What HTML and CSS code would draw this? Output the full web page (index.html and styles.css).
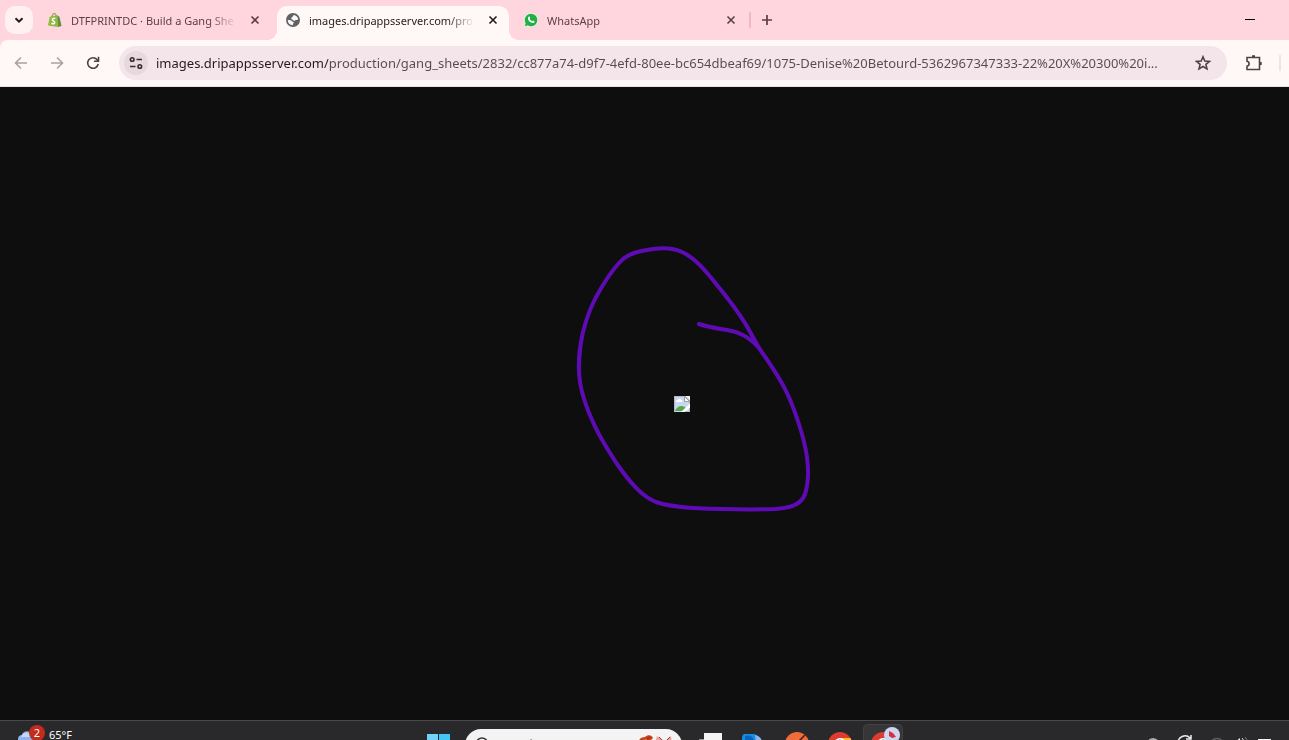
FILE: index.html
```html
<!DOCTYPE html>
<html lang="en">
<head>
    <meta charset="UTF-8">
    <meta name="viewport" content="width=device-width, initial-scale=1.0">
    <title>images.dripappsserver.com</title>
    <link rel="stylesheet" href="styles.css">
</head>
<body>
<header class="browser">
    <!-- tab strip -->
    <div class="tab-strip">
        <button class="tab-search" aria-label="Search tabs">
            <svg width="12" height="12" viewBox="0 0 12 12"><path d="M2.500 4.200 6 7.600l3.500-3.400" fill="none" stroke="#26191c" stroke-width="2"/></svg>
        </button>
        <div class="tab">
            <svg class="favicon" viewBox="0 0 16 16">
                <path d="M2 4.200 10.500 2.600 11.300 16 0 14.200z" fill="#8dbb3f"/>
                <path d="M10.500 2.600 13 4.200 15.500 14.800 11.300 16z" fill="#5e8e3e"/>
                <path d="M4.500 4.500C5 1.500 6.500.4 7.600.6 8.800.8 9.300 2.200 9.300 3.600" fill="none" stroke="#7fa83c" stroke-width="1.200"/>
                <path d="M8.300 6.500C6.500 5.700 5 6.300 5 7.700c0 1.600 2.800 1.400 2.700 3.300C7.600 12.500 5.800 12.700 4 11.700" fill="none" stroke="#fff" stroke-width="1.700"/>
            </svg>
            <button class="tab-title">DTFPRINTDC · Build a Gang She</button>
            <button class="tab-close" aria-label="Close tab"><svg width="10" height="10" viewBox="0 0 10 10"><path d="M1.500 1.500l7 7M8.500 1.500l-7 7"/></svg></button>
        </div>
        <div class="tab active">
            <svg class="favicon" viewBox="0 0 16 16">
                <circle cx="8" cy="8" r="8" fill="#5f6368"/>
                <path d="M9 2.200c2.300.4 4.200 2 5 4.300-.6 1.300-1.500 1.900-2.600 1.500-.9-.3-1 1-2 1-1.200 0-1-1.300-2-1.700-1.100-.4-1.600-.8-1.300-1.700.3-.8 1.200-.6 1.500-1.300.2-.8.600-1.500 1.400-2.100zM2 8c1.800 0 4.300 0 5 1.300.6.900 1.800.6 2 1.600.2.900-.9 1.100-1.100 1.900-.1.500 0 .8-.3 1.200C4.500 13.800 2 11.300 2 8z" fill="#fff8f7"/>
            </svg>
            <button class="tab-title">images.dripappsserver.com/pro</button>
            <button class="tab-close" aria-label="Close tab"><svg width="10" height="10" viewBox="0 0 10 10"><path d="M1.500 1.500l7 7M8.500 1.500l-7 7"/></svg></button>
        </div>
        <div class="tab">
            <svg class="favicon" viewBox="0 0 16 16">
                <path d="M.3 15.700 1.400 11.800A7.600 7.600 0 1 1 4.300 14.700z" fill="#1fb141" stroke="#fff" stroke-width=".8"/>
                <path d="M5.300 4.200c.4-.4 1-.3 1.200.2l.5 1.200c.1.500-.5.800-.5 1.200.6 1.200 1.500 2 2.700 2.500.4 0 .8-.8 1.200-.7l1.400.7c.3.200.3 1.200-.3 1.700-1 .8-2.300.6-3.900-.3C6 9.800 4.900 8.300 4.600 6.900c-.2-1.200.1-2.100.7-2.700z" fill="#fff"/>
            </svg>
            <button class="tab-title">WhatsApp</button>
            <button class="tab-close" aria-label="Close tab"><svg width="10" height="10" viewBox="0 0 10 10"><path d="M1.500 1.500l7 7M8.500 1.500l-7 7"/></svg></button>
        </div>
        <span class="tab-divider"></span>
        <button class="new-tab" aria-label="New tab">
            <svg width="12" height="12" viewBox="0 0 12 12"><path d="M6 1v10M1 6h10" stroke="#5b3f45" stroke-width="1.700"/></svg>
        </button>
        <button class="minimize" aria-label="Minimize">
            <svg width="10" height="10" viewBox="0 0 10 10"><path d="M0 4.500h10" stroke="#000"/></svg>
        </button>
    </div>

    <!-- toolbar -->
    <div class="toolbar">
        <nav class="nav-buttons">
            <button class="icon-btn muted" aria-label="Back">
                <svg width="16" height="16" viewBox="0 0 16 16"><path d="M14 8H3M8 2.500 2.500 8 8 13.500"/></svg>
            </button>
            <button class="icon-btn muted" aria-label="Forward">
                <svg width="16" height="16" viewBox="0 0 16 16"><path d="M2 8h11M8 2.500 13.500 8 8 13.500"/></svg>
            </button>
            <button class="icon-btn" aria-label="Reload">
                <svg width="16" height="16" viewBox="0 0 16 16"><path d="M13.200 9A5.300 5.300 0 1 1 12 4.500L13.500 6M13.500 1.800V6.200H9"/></svg>
            </button>
        </nav>
        <div class="omnibox">
            <button class="site-info" aria-label="View site information">
                <svg width="14" height="14" viewBox="0 0 14 14"><path d="M7.500 3.500h5.500M1 10.500h5.500"/><circle cx="3.200" cy="3.500" r="1.800"/><circle cx="10.800" cy="10.500" r="1.800"/></svg>
            </button>
            <input class="url" type="text" aria-label="Address and search bar" value="images.dripappsserver.com/production/gang_sheets/2832/cc877a74-d9f7-4efd-80ee-bc654dbeaf69/1075-Denise%20Betourd-5362967347333-22%20X%20300%20i...">
            <button class="icon-btn" aria-label="Bookmark this tab">
                <svg width="16" height="16" viewBox="0 0 16 16"><path d="M8 1.800 9.800 6l4.700.4-3.600 3 1.100 4.500L8 11.500l-4 2.400 1.100-4.500-3.600-3L6.200 6z"/></svg>
            </button>
        </div>
        <button class="icon-btn" aria-label="Extensions">
            <svg width="18" height="18" viewBox="0 0 18 18"><path d="M2 3.500H14.500V15.500H2V12.200C4.800 11.800 4.800 7.800 2 7.300z"/><path d="M7 2.500h3M15.500 8v3" stroke-width="2.400"/></svg>
        </button>
        <span class="toolbar-divider"></span>
    </div>
</header>

<main class="page">
    <svg class="broken-image" role="img" aria-label="Image failed to load" viewBox="0 0 16 16">
        <path d="M0 0h11l5 5v11H0z" fill="#c6d6f3"/>
        <path d="M11 0h5v5z" fill="#f0f0f0"/>
        <path d="M2 6c0-1.500 1-2 2-2 .6-1.700 3-1.500 3.300 0C8.500 4 9 5 8.500 6z" fill="#fff"/>
        <path d="M1 15c1-3 3.500-5 6.500-5 2 0 3.500 1 4.500 2L8.500 15z" fill="#5aa845"/>
        <path d="M16 7.500v4L11.500 16H7z" fill="#fff"/>
        <path d="M.5 15.500V.5H11L15.500 5v3M11 15.500h4.500V12" fill="none" stroke="#b5b9c0"/>
        <path d="M10.500.5v5h5z" fill="#fff" stroke="#a0a0a0"/>
    </svg>
    <!-- pen stroke drawn over the page -->
    <svg class="pen-mark" viewBox="0 0 238 270">
        <path d="M124 80C133 83 140 84 152 86C165 88 174 93 184 104C196 121 205 134 212 149C219 164 229 192 232 213C234 229 233 241 230 250C226 262 213 264 200 265C175 266 140 265 118 264C103 263 92 262 81 258C66 252 54 237 42 220C29 200 23 190 18 178C11 163 7 151 5 138C3 125 4 105 8 88C12 72 17 59 25 46C32 34 36 28 44 19C52 9 65 7 78 5C91 3 99 4 107 8C120 14 130 26 142 41C155 57 166 71 174 86L184 104"/>
    </svg>
</main>

<footer class="taskbar">
    <button class="weather">
        <span class="weather-icon">
            <svg width="28" height="20" viewBox="0 0 28 20"><path d="M0 14c0-3 2-4 4-4 1-5 9-5 10 0 4 0 5 3 5 5v5H0z" fill="#8fb2f0"/><path d="M3 12c1-5 9-6 10 0z" fill="#c3d7fa"/></svg>
            <span class="badge">2</span>
        </span>
        <span class="degrees">65°F</span>
    </button>
    <div class="apps">
        <button class="app start" aria-label="Start">
            <svg width="23" height="23" viewBox="0 0 23 23"><path d="M0 0h11v11H0z" fill="#72d2f7"/><path d="M12 0h11v11H12z" fill="#43c5f5"/><path d="M0 12h11v11H0zM12 12h11v11H12z" fill="#1eaaf0"/></svg>
        </button>
        <label class="search">
            <svg width="14" height="16" viewBox="0 0 14 16"><circle cx="7" cy="6.500" r="5.500" fill="none" stroke="#333" stroke-width="1.500"/></svg>
            <input type="text" placeholder="Search" aria-label="Search">
            <svg class="search-art" width="36" height="20" viewBox="0 0 36 20">
                <path d="M1 12C1 5 4 3 8 3c3-3 7-2 8 1-2 3-5 2-6 6z" fill="#c8421b"/><path d="M4 8l4-3 3 1-3 4z" fill="#e8792b"/><path d="M10 5l3-2" stroke="#8b2312"/>
                <path d="M20 2l6 4h3l5-4 1 9-5 2H22l-4-3z" fill="#f1a09b"/><path d="M22 3l3 3M33 3l-3 3" stroke="#8c3d3c"/>
            </svg>
        </label>
        <button class="app" aria-label="Task view">
            <svg width="24" height="24" viewBox="0 0 24 24"><path d="M0 7h17v16H0z" fill="#999"/><path d="M5 1h18v17H5z" fill="#f4f4f4"/></svg>
        </button>
        <button class="app" aria-label="Mail">
            <svg width="24" height="24" viewBox="0 0 24 24"><path d="M2 2h11l4 6v15H0V8c0-3 0-5 2-6z" fill="#168ee0"/><path d="M3 4q7-2 9 5H3z" fill="#0863bd"/><path d="M13 3q6 1 7 7h-6z" fill="#91b6ed"/></svg>
        </button>
        <button class="app" aria-label="Postman">
            <svg width="24" height="24" viewBox="0 0 24 24"><circle cx="12" cy="12" r="12" fill="#f26b3a"/><path d="M20 3 12 11" stroke="#3a211b" stroke-width="1.500"/></svg>
        </button>
        <button class="app" aria-label="Chrome">
            <svg width="24" height="24" viewBox="0 0 24 24"><circle cx="12" cy="12" r="12" fill="#dd3b30"/><path d="M12 6h10.400A12 12 0 0 1 24 12v8H12z" fill="#fbc116"/><circle cx="12" cy="12" r="6" fill="#fff"/><circle cx="12" cy="12" r="4.500" fill="#4285f4"/></svg>
        </button>
        <button class="app running" aria-label="Chrome, profile window">
            <svg width="24" height="24" viewBox="0 0 24 24"><circle cx="12" cy="12" r="12" fill="#dd3b30"/><circle cx="12" cy="12" r="6" fill="#fff"/><circle cx="12" cy="12" r="4.500" fill="#4285f4"/></svg>
            <svg class="profile" width="16" height="16" viewBox="0 0 16 16"><circle cx="8" cy="8" r="8" fill="#cfd5ef"/><path d="M5 4l4 2 3 4-4 1-3-2z" fill="#d6303f"/></svg>
        </button>
    </div>
    <div class="tray">
        <div class="tray-icons">
            <svg width="16" height="16" viewBox="0 0 16 16"><path d="M4 10.500Q8 7.500 12 10.500" fill="none" stroke="#aaa" stroke-width="2"/></svg>
            <svg width="16" height="16" viewBox="0 0 16 16"><path d="M1 12A7 7 0 0 1 13 8M14 5v4H9" fill="none" stroke="#eee" stroke-width="1.500"/></svg>
            <svg width="16" height="16" viewBox="0 0 16 16"><path d="M2 12a7 7 0 0 1 12 0" fill="none" stroke="#5d5d5e" stroke-width="1.500"/></svg>
        </div>
        <svg width="16" height="16" viewBox="0 0 16 16"><path d="M2 12l5-4v8z" fill="#eee"/><path d="M9 8q3 3 3 7" fill="none" stroke="#ddd"/><path d="M12 7q3 3 3 7" fill="none" stroke="#777"/></svg>
        <svg width="16" height="16" viewBox="0 0 16 16"><path d="M1 9h13v7H1z" fill="#f4f4f4"/></svg>
    </div>
</footer>
</body>
</html>
```
FILE: styles.css
```css
/* ---------- base ---------- */
*{box-sizing:border-box}
body{
    margin:0;height:100vh;overflow:hidden;
    display:flex;flex-direction:column;
    font-family:"Noto Sans","Open Sans",sans-serif;
    font-size:11px;color:#26191c;background:#0e0e0e;
}
button{
    display:flex;align-items:center;justify-content:center;
    padding:0;border:none;background:none;
    font:inherit;color:inherit;cursor:pointer;
}
input{border:none;outline:none;background:none;font:inherit;padding:0;min-width:0}
svg{display:block;flex:none}

/* ---------- tab strip ---------- */
.browser{flex:none;background:#ffd6de}
.tab-strip{display:flex;height:40px;padding:6px 34px 0 5px}
.tab-search{width:28px;height:28px;border-radius:10px;background:#fff0f2}
.tab{
    position:relative;flex:0 1 232px;min-width:0;height:34px;
    margin-left:6px;padding:0 8px 6px 9px;
    display:flex;align-items:center;color:#5b3f45;
}
.favicon{width:14px;height:14px}
.tab-title{
    flex:1;min-width:0;margin:0 10px 0 9px;
    justify-content:flex-start;overflow:hidden;white-space:nowrap;
    -webkit-mask-image:linear-gradient(to right,#000 calc(100% - 28px),transparent);
    mask-image:linear-gradient(to right,#000 calc(100% - 28px),transparent);
}
.tab-close{width:16px;height:16px}
.tab-close svg{fill:none;stroke:currentColor;stroke-width:1.6}
.tab.active{background:#fff8f7;border-radius:10px 10px 0 0;color:#26191c}
.tab.active::before,.tab.active::after{
    content:"";position:absolute;bottom:0;width:10px;height:10px;
}
.tab.active::before{right:100%;background:radial-gradient(circle at 0 0,transparent 10px,#fff8f7 10px)}
.tab.active::after{left:100%;background:radial-gradient(circle at 100% 0,transparent 10px,#fff8f7 10px)}
.tab-divider{width:2px;height:16px;margin:6px 2px;border-radius:1px;background:#f5b5c3}
.new-tab{width:28px;height:28px}
.minimize{width:10px;height:28px;margin-left:auto}

/* ---------- toolbar ---------- */
.toolbar{
    display:flex;align-items:center;height:47px;padding:0 8px 0 5px;
    background:#fff8f7;border-bottom:1px solid #f3dfe2;border-radius:8px 0 0 0;
}
.nav-buttons{display:flex;gap:4px;margin-right:10px}
.icon-btn{flex:none;width:32px;height:32px;color:#4f4044}
.icon-btn svg{fill:none;stroke:currentColor;stroke-width:1.6}
.icon-btn.muted{color:#aaa1a3}
.omnibox{
    flex:1;min-width:0;display:flex;align-items:center;
    height:34px;margin-right:11px;padding:0 8px 0 5px;
    border-radius:17px;background:#f3e5e9;
}
.site-info{flex:none;width:24px;height:24px;border-radius:50%;background:#e6d8dc}
.site-info svg{fill:none;stroke:#382c2f;stroke-width:1.6}
/* host name is darker than the rest of the address */
.url{
    flex:1;height:24px;margin:0 6px 0 8px;font-size:13px;
    color:transparent;
    background:linear-gradient(to right,#26191c 172px,#5a494d 172px);
    -webkit-background-clip:text;background-clip:text;
}
.toolbar-divider{width:2px;height:16px;margin-left:9px;background:#f7dfe4}

/* ---------- page ---------- */
.page{
    position:relative;flex:1;min-height:0;padding-left:75px;
    display:flex;align-items:center;justify-content:center;
}
.broken-image{width:16px;height:16px}
.pen-mark{
    position:absolute;left:calc(50% - 70px);top:calc(50% - 160px);
    width:238px;height:270px;
}
.pen-mark path{fill:none;stroke:#5e0bb5;stroke-width:4;stroke-linecap:round;stroke-linejoin:round}

/* ---------- taskbar ---------- */
.taskbar{
    flex:none;height:20px;overflow:hidden;
    display:grid;grid-template-columns:21fr auto 19fr;align-items:start;
    border-top:1px solid #4a4a4a;background:#29292b;color:#fff;
}
.weather{justify-self:start;align-items:flex-start;gap:3px;margin-left:18px;padding-top:4px}
.weather-icon{position:relative}
.degrees{margin-top:4px;line-height:12px}
.badge{
    position:absolute;left:11px;top:0;width:16px;height:16px;border-radius:50%;
    background:#c42b1c;font-size:11px;line-height:16px;text-align:center;
}
.apps{display:flex;align-items:flex-start;height:48px}
.app{flex:none;position:relative;width:40px;height:40px;margin:3px 0 0 3px}
.app.start{width:24px;margin:4px 14px 0 0}
.search{
    flex:none;display:flex;align-items:flex-start;
    width:217px;height:32px;margin:8px 6px 0 0;padding:8px 9px 0 10px;
    border-radius:16px;background:#f3f3f3;
}
.search input{flex:1;margin-left:10px;font-size:12px;line-height:16px;color:#555}
.search-art{margin-top:-3px}
.app.running{border-radius:5px;background:#363638;box-shadow:inset 0 0 0 1px #414143}
.profile{position:absolute;left:21px;top:3px}
.tray{display:flex;justify-self:end;gap:8px;margin:9px 16px 0 0}
.tray-icons{display:flex;gap:16px}
```
